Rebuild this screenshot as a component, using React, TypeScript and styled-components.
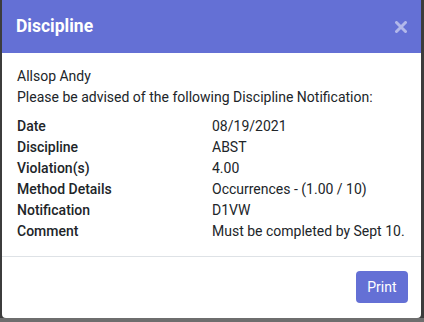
import React from "react";
import styled, { createGlobalStyle } from "styled-components";

const GlobalStyle = createGlobalStyle`
  html, body {
    margin: 0;
    padding: 0;
    background: #3c3c3c;
    font-family: Roboto, "Liberation Sans", sans-serif;
  }
`;

const Page = styled.div`
  width: 424px;
  height: 322px;
  display: flex;
  flex-direction: column;
  overflow: hidden;
`;

const Backdrop = styled.div`
  flex: 1;
  padding: 0 3px 0 2px;
  background: #3c3c3c;
  display: flex;
`;

const BottomStrip = styled.div`
  height: 4px;
  background: #6e6e6e;
`;

const Modal = styled.div`
  flex: 1;
  background: #fff;
  border-radius: 0 0 4px 4px;
  display: flex;
  flex-direction: column;
  overflow: hidden;
`;

const Header = styled.div`
  height: 53px;
  background: #6470d5;
  display: flex;
  align-items: center;
  justify-content: space-between;
  padding: 0 14px 0 14px;
  box-sizing: border-box;
`;

const Title = styled.h5`
  margin: 0;
  color: #fff;
  font-size: 17.5px;
  font-weight: 700;
  line-height: 1;
`;

const Close = styled.button`
  border: 0;
  background: none;
  padding: 0;
  width: 12px;
  height: 12px;
  display: flex;
  cursor: pointer;
`;

const Body = styled.div`
  padding: 13px 10px 14px 15px;
  font-size: 14px;
  line-height: 21px;
  color: #212529;
  border-bottom: 1px solid #dee2e6;
`;

const Line = styled.div``;

const Details = styled.div`
  margin-top: 8px;
  display: grid;
  grid-template-columns: 195px 1fr;
`;

const Label = styled.div`
  font-weight: 500;
`;

const Value = styled.div`
  white-space: nowrap;
`;

const Footer = styled.div`
  flex: 1;
  display: flex;
  justify-content: flex-end;
  align-items: flex-start;
  padding: 14px 13px 0 0;
`;

const PrintButton = styled.button`
  height: 32px;
  padding: 0 11.5px;
  border: 0;
  border-radius: 4px;
  background: #6470d5;
  color: #fff;
  font-family: Roboto, "Liberation Sans", sans-serif;
  font-size: 14px;
  cursor: pointer;
`;

const rows: [string, string][] = [
  ["Date", "08/19/2021"],
  ["Discipline", "ABST"],
  ["Violation(s)", "4.00"],
  ["Method Details", "Occurrences - (1.00 / 10)"],
  ["Notification", "D1VW"],
  ["Comment", "Must be completed by Sept 10."],
];

const App = () => {
  return (
    <Page>
      <GlobalStyle />
      <Backdrop>
        <Modal>
          <Header>
            <Title>Discipline</Title>
            <Close aria-label="Close">
              <svg width="12" height="12" viewBox="0 0 12 12">
                <path
                  d="M1.5 1.5 L10.5 10.5 M10.5 1.5 L1.5 10.5"
                  stroke="rgba(255,255,255,0.5)"
                  strokeWidth="3"
                  strokeLinecap="round"
                />
              </svg>
            </Close>
          </Header>
          <Body>
            <Line>Allsop Andy</Line>
            <Line>Please be advised of the following Discipline Notification:</Line>
            <Details>
              {rows.map(([label, value]) => (
                <React.Fragment key={label}>
                  <Label>{label}</Label>
                  <Value>{value}</Value>
                </React.Fragment>
              ))}
            </Details>
          </Body>
          <Footer>
            <PrintButton>Print</PrintButton>
          </Footer>
        </Modal>
      </Backdrop>
      <BottomStrip />
    </Page>
  );
};

export default App;
